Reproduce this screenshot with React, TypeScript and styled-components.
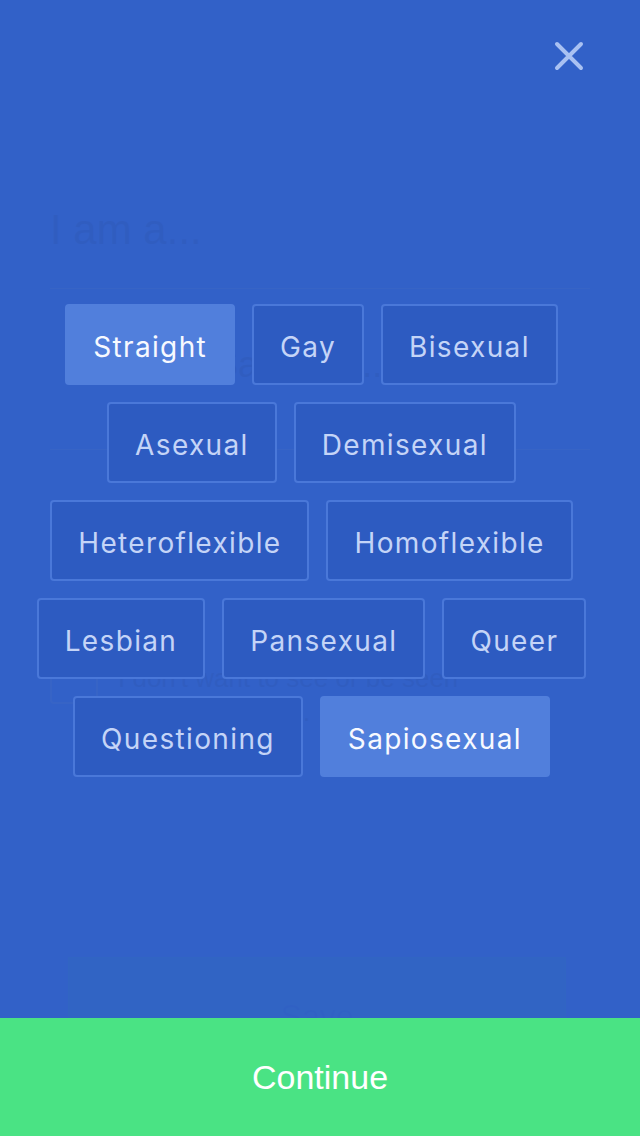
import React, { useState } from 'react';
import styled, { createGlobalStyle } from 'styled-components';

const GlobalStyle = createGlobalStyle`
  html, body {
    margin: 0;
    padding: 0;
    background: #3261c8;
  }

  * {
    box-sizing: border-box;
  }
`;

const Screen = styled.div`
  position: relative;
  width: 640px;
  height: 1136px;
  overflow: hidden;
  background: #3261c8;
  font-family: Inter, "Noto Sans", sans-serif;
`;

// the form that sits behind the picker overlay
const Form = styled.div`
  display: flex;
  flex-direction: column;
  padding: 206px 50px 0 50px;
`;

const Title = styled.h1`
  margin: 0;
  font-family: "Liberation Sans", Arial, sans-serif;
  font-size: 42px;
  font-weight: 400;
  color: #1f2a44;
`;

const Field = styled.div`
  margin-top: 34px;
  height: 162px;
  border-top: 1px solid #8a94a8;
  border-bottom: 1px solid #8a94a8;
  display: flex;
  align-items: center;
  padding: 0 20px 8px 20px;
  font-family: "Liberation Sans", Arial, sans-serif;
  font-size: 36px;
  color: #1f2a44;
`;

const CheckRow = styled.div`
  margin-top: 205px;
  display: flex;
  gap: 20px;
`;

const CheckBox = styled.div`
  width: 48px;
  height: 49px;
  flex-shrink: 0;
  border: 2px solid #8a94a8;
  border-radius: 4px;
`;

const CheckLabel = styled.div`
  padding-top: 6px;
  font-family: "Liberation Sans", Arial, sans-serif;
  font-size: 26px;
  line-height: 34px;
  color: #1f2a44;
`;

const SaveButton = styled.div`
  margin: 228px 24px 0 18px;
  height: 110px;
  border: 1px solid #2aa47a;
  background: #2f9c8a;
  display: flex;
  justify-content: center;
  padding-top: 40px;
  font-family: "Liberation Sans", Arial, sans-serif;
  font-size: 32px;
  color: #1f6f8a;
`;

const Overlay = styled.div`
  position: absolute;
  inset: 0;
  display: flex;
  flex-direction: column;
  background: rgba(50, 97, 200, 0.94);
`;

const CloseRow = styled.div`
  display: flex;
  justify-content: flex-end;
  padding: 32px 47px 0 0;
`;

const CloseButton = styled.button`
  width: 48px;
  height: 48px;
  padding: 0;
  border: none;
  background: transparent;
  display: flex;
  align-items: center;
  justify-content: center;
  cursor: pointer;
`;

const Chips = styled.div`
  margin-top: 224px;
  display: flex;
  flex-direction: column;
  gap: 17px;
  padding-right: 17px;
`;

const ChipRow = styled.div`
  display: flex;
  justify-content: center;
  gap: 17px;
`;

const Chip = styled.button<{ $active: boolean }>`
  height: 81px;
  padding: 5px 26px 0 26px;
  border-radius: 4px;
  border: 2px solid ${(p) => (p.$active ? '#517fdc' : '#4a78d9')};
  background: ${(p) => (p.$active ? '#517fdc' : '#2d5bc1')};
  color: ${(p) => (p.$active ? '#f7f9ff' : '#c4d4f7')};
  font-family: Inter, "Noto Sans", sans-serif;
  font-size: 28px;
  font-weight: 400;
  letter-spacing: 1.35px;
  cursor: pointer;
`;

const Spacer = styled.div`
  flex: 1;
`;

const ContinueButton = styled.button`
  height: 118px;
  border: none;
  background: #4ae384;
  color: #ffffff;
  font-family: "Liberation Sans", Arial, sans-serif;
  font-size: 34px;
  cursor: pointer;
`;

const rows = [
  ['Straight', 'Gay', 'Bisexual'],
  ['Asexual', 'Demisexual'],
  ['Heteroflexible', 'Homoflexible'],
  ['Lesbian', 'Pansexual', 'Queer'],
  ['Questioning', 'Sapiosexual'],
];

const App: React.FC = () => {
  const [selected, setSelected] = useState<string[]>(['Straight', 'Sapiosexual']);

  const toggle = (name: string) => {
    setSelected((s) => (s.includes(name) ? s.filter((n) => n !== name) : [...s, name]));
  };

  return (
    <Screen>
      <GlobalStyle />
      <Form>
        <Title>I am a...</Title>
        <Field>Straight, Sapiosex...</Field>
        <CheckRow>
          <CheckBox />
          <CheckLabel>
            I don't want to see or be seen
            <br />
            by straight peo...
          </CheckLabel>
        </CheckRow>
        <SaveButton>Save</SaveButton>
      </Form>

      <Overlay>
        <CloseRow>
          <CloseButton aria-label="Close">
            <svg width="30" height="30" viewBox="0 0 30 30">
              <path
                d="M3 3 L27 27 M27 3 L3 27"
                stroke="#a9c1f2"
                strokeWidth="4"
                strokeLinecap="round"
                fill="none"
              />
            </svg>
          </CloseButton>
        </CloseRow>

        <Chips>
          {rows.map((row, i) => (
            <ChipRow key={i}>
              {row.map((name) => (
                <Chip key={name} $active={selected.includes(name)} onClick={() => toggle(name)}>
                  {name}
                </Chip>
              ))}
            </ChipRow>
          ))}
        </Chips>

        <Spacer />
        <ContinueButton>Continue</ContinueButton>
      </Overlay>
    </Screen>
  );
};

export default App;
